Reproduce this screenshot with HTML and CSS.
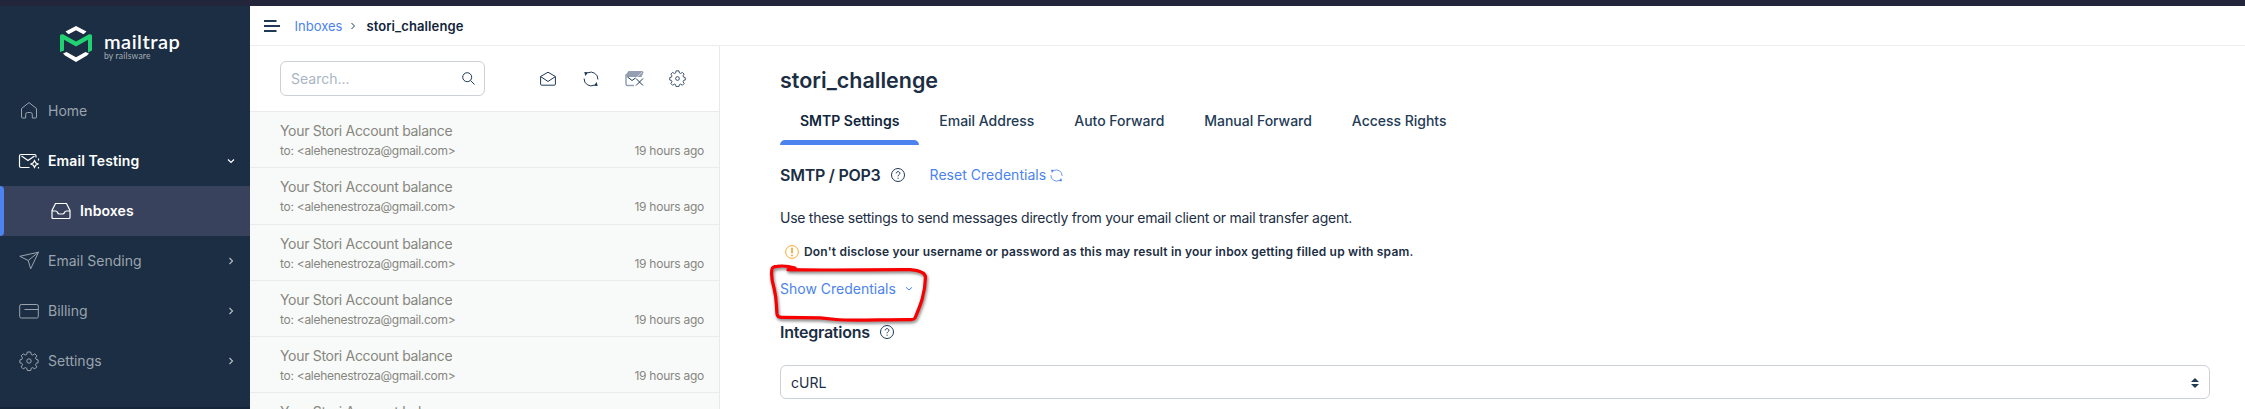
FILE: index.html
```
<!DOCTYPE html>
<html lang="en">
<head>
<meta charset="utf-8">
<title>stori_challenge</title>
<link rel="stylesheet" href="styles.css">
</head>
<body>
<svg class="defs" width="0" height="0">
  <symbol id="gear" viewBox="0 0 20 20"><path d="M8.3 1h3.4l.5 2.4 1.5.7 2.1-1.3 2 2-1.3 2.1.7 1.5 1.9.5v2.9l-1.9.5-.7 1.5 1.3 2.1-2 2-2.1-1.3-1.5.7-.5 2.2H8.3l-.5-2.2-1.5-.7-2.1 1.3-2-2 1.3-2.1-.7-1.5-1.9-.5V8.900l1.900-.5.7-1.500-1.300-2.100 2-2 2.100 1.300 1.500-.7z"/><circle cx="10" cy="10" r="2.2"/></symbol>
  <symbol id="chev" viewBox="0 0 8 8"><path d="M2.500 1l3 3-3 3"/></symbol>
  <symbol id="refresh" viewBox="0 0 16 16"><path d="M4.700 1.900A7 7 0 0 1 14.900 8.500M11.300 14.100A7 7 0 0 1 1.100 7.500"/><path class="head" d="M1.300 1l4 .300-3 3.600zM14.700 15l-4-.300 3-3.600z"/></symbol>
  <symbol id="help" viewBox="0 0 14 14"><circle cx="7" cy="7" r="6.500"/><path d="M5.200 5.400c0-2.400 3.700-2.300 3.700-.1C8.900 6.700 7.100 6.600 7.100 8.300M7.100 9.700v1.100"/></symbol>
</svg>
<div class="app">
  <div class="topbar"></div>
  <nav class="sidebar">
    <div class="logo">
      <svg class="mark" width="32" height="36" viewBox="0 0 32 36"><path fill="#fff" d="M16 0L26.500 5.500 23.500 8.200 16 4.200 8.500 8.200 5.500 5.500zM3 27.500L6.500 26 16 31.300 25.500 26 29 27.500 27 29.500 16 36 5 29.500z"/><path fill="#22d172" d="M0 26V9L2.500 8 16 15.500 29.500 8 32 9V24.500L28 26.500V13.800L16 20.500 4 13.800V24.500z"/></svg>
      <div class="brand"><span class="name">mailtrap</span><span class="by">by railsware</span></div>
    </div>
    <a class="item"><svg class="ic" width="20" height="20" viewBox="0 0 20 20"><path d="M2.500 7.500L10 1.600l7.500 5.900V16q0 1-1 1h-3.200v-3.500q0-2-1.800-2h-3q-1.800 0-1.800 2V17H3.500q-1 0-1-1z"/></svg><span>Home</span></a>
    <a class="item on"><svg class="ic wide" width="23" height="20" viewBox="0 0 23 20"><path d="M11.500 16.500H3q-1.500 0-1.500-1.500V5Q1.500 3.500 3 3.500h13.500Q18 3.500 18 5v1.500M3.500 5l6.500 4.500L16.500 5M16.500 9.500l1.200 2.300 2.300 1.200-2.300 1.200-1.200 2.300-1.200-2.300L13 13l2.300-1.200zM20.500 7.500v2M20.500 16v1.500"/></svg><span>Email Testing</span><svg class="arr" width="8" height="8"><path d="M1 2.500l3 3 3-3"/></svg></a>
    <a class="item sub on"><svg class="ic" width="20" height="20" viewBox="0 0 20 20"><path d="M4.500 2.500h11L19 9.500v7q0 1-1 1H2q-1 0-1-1v-7zM1 10h3.500q1.500 0 2 1.500t2 1.500h3q1.500 0 2-1.500t2-1.500H19"/></svg><span>Inboxes</span></a>
    <a class="item"><svg class="ic" width="20" height="20" viewBox="0 0 20 20"><path d="M.8 5.300L19.500 1.200 11.700 17.800 9.200 9.500zM9.200 9.500L19.500 1.200"/></svg><span>Email Sending</span><svg class="arr" width="8" height="8"><use href="#chev"/></svg></a>
    <a class="item"><svg class="ic" width="20" height="20" viewBox="0 0 20 20"><rect x=".7" y="3.500" width="18.600" height="13.500" rx="1.500"/><path d="M5.500 8.500h13.800"/></svg><span>Billing</span><svg class="arr" width="8" height="8"><use href="#chev"/></svg></a>
    <a class="item"><svg class="ic" width="20" height="20"><use href="#gear"/></svg><span>Settings</span><svg class="arr" width="8" height="8"><use href="#chev"/></svg></a>
  </nav>
  <header class="crumbs">
    <svg width="16" height="12" viewBox="0 0 16 12"><path class="fill" d="M0 0h12.500v2H0zM0 5h16v2H0zM0 10h12.500v2H0z"/></svg>
    <a class="link">Inboxes</a><svg class="sep" width="8" height="8"><use href="#chev"/></svg><b>stori_challenge</b>
  </header>
  <section class="mail">
    <div class="tools">
      <div class="search"><span>Search...</span><svg width="13" height="13" viewBox="0 0 13 13"><circle cx="5.200" cy="5.200" r="4.500"/><path d="M8.500 8.500l4 4"/></svg></div>
      <svg class="t1" width="16" height="16" viewBox="0 0 16 16"><path d="M.6 5.500L8 1.200l7.400 4.300V13q0 1.200-1.200 1.200H1.800Q.6 14.200.6 13zM.6 5.500L8 10.500l7.400-5"/></svg>
      <svg class="t2" width="16" height="16"><use href="#refresh"/></svg>
      <svg class="t3" width="19" height="16" viewBox="0 0 19 16"><path fill="#94a0b2" stroke="none" d="M3.500 0h13.500q1.500 0 1.500 1.500L16.500 6H2L.5 4z"/><path stroke="#94a0b2" stroke-width="1.500" d="M1 3.500V13q0 1.500 1.500 1.500H9"/><path d="M2.500 6L7 9.500l3.500-2.500M11 7.500l7 7M18 7.500l-7 7"/><path stroke="#fff" stroke-dasharray="1.500 1" d="M12.500 5.500l4.500-4"/></svg>
      <svg class="t4" width="17" height="17"><use href="#gear"/></svg>
    </div>
    <div class="row"><p>Your Stori Account balance</p><div><span class="to">to: &lt;alehenestroza@gmail.com&gt;</span><span class="ago">19 hours ago</span></div></div>
    <div class="row"><p>Your Stori Account balance</p><div><span class="to">to: &lt;alehenestroza@gmail.com&gt;</span><span class="ago">19 hours ago</span></div></div>
    <div class="row"><p>Your Stori Account balance</p><div><span class="to">to: &lt;alehenestroza@gmail.com&gt;</span><span class="ago">19 hours ago</span></div></div>
    <div class="row"><p>Your Stori Account balance</p><div><span class="to">to: &lt;alehenestroza@gmail.com&gt;</span><span class="ago">19 hours ago</span></div></div>
    <div class="row"><p>Your Stori Account balance</p><div><span class="to">to: &lt;alehenestroza@gmail.com&gt;</span><span class="ago">19 hours ago</span></div></div>
    <div class="row"><p>Your Stori Account balance</p></div>
  </section>
  <main class="main">
    <h1>stori_challenge</h1>
    <div class="tabs"><a class="active">SMTP Settings</a><a>Email Address</a><a>Auto Forward</a><a>Manual Forward</a><a>Access Rights</a></div>
    <div class="heading"><h2>SMTP / POP3</h2><svg width="14" height="14"><use href="#help"/></svg><a class="link reset">Reset Credentials</a><svg class="blue" width="13" height="13"><use href="#refresh"/></svg></div>
    <p class="desc">Use these settings to send messages directly from your email client or mail transfer agent.</p>
    <div class="warn"><svg width="14" height="14" viewBox="0 0 14 14"><circle cx="7" cy="7" r="6.400"/><path stroke-width="1.800" d="M7 2.800v5.500M7 9.700v1.600"/></svg><b>Don't disclose your username or password as this may result in your inbox getting filled up with spam.</b></div>
    <div class="show"><a class="link">Show Credentials</a><svg class="blue" width="8" height="8"><path d="M1 2.300l3 2.700 3-2.700"/></svg></div>
    <div class="heading integ"><h2>Integrations</h2><svg width="14" height="14"><use href="#help"/></svg></div>
    <div class="select"><span>cURL</span><svg width="8" height="10" viewBox="0 0 8 10"><path class="fill" d="M4 0l4 4H0zM4 10L0 6h8z"/></svg></div>
  </main>
</div>
<svg class="scribble" width="170" height="70" viewBox="765 260 170 70"><path d="M788 269.700C820 270.500 880 269.500 910 269.700Q925 271 925.500 277C925 295 920 306 915 318Q914 319.600 911 319.600C880 319.500 850 321 836 319.500L820 317.800 781 317.300Q777.500 317.300 777 314C776 304 777 300 774 288 771 278 771 274 772 269Q772.500 266.500 777 266.300C784 265.500 790 266.500 795 268"/></svg>
</body>
</html>
```
FILE: styles.css
```
* { box-sizing: border-box; }
body { margin: 0; font: 14px/20px Inter, "Liberation Sans", sans-serif; color: #1b2e43; background: #fff; overflow: hidden; }
h1, h2, p { margin: 0; font-weight: 600; }
svg { fill: none; stroke: #1f3956; flex: none; display: block; }
.defs { position: absolute; }
.fill { fill: #1f3956; stroke: none; }
.head { fill: currentColor; stroke: none; }
.link { color: #4c83ee; }
.app { display: grid; grid-template: 6px 40px 363px / 250px 470px 1fr; height: 409px; overflow: hidden; }
.topbar { grid-column: 1 / -1; background: #23263b; }
.sidebar { grid-row: 2 / 4; background: #1b2e43; border-bottom: 2px solid #172539; color: #9ba4ae; }
.logo { height: 80px; padding: 20px 0 0 60px; display: flex; gap: 12px; }
.mark { stroke: none; }
.brand { display: flex; flex-direction: column; padding-top: 4px; color: #fff; }
.name { font: 600 20px/22px Lato, sans-serif; letter-spacing: .5px; }
.by { font: 8.500px/8px Lato, sans-serif; color: #a7afb9; letter-spacing: .2px; }
.item { display: flex; align-items: center; height: 50px; padding: 0 15px 0 19px; }
.item .ic { width: 20px; margin-right: 9px; stroke: #9ba4ae; }
.item .wide { width: 23px; margin: 0 7px 0 -1px; }
.item .arr { margin-left: auto; stroke: #b4bbc3; stroke-width: 1.200; }
.item.on { color: #fff; font-weight: 600; letter-spacing: .1px; }
.item.on svg { stroke: #fff; stroke-width: 1.200; }
.item.sub { position: relative; background: #39425d; padding-left: 52px; }
.sub::before { content: ""; position: absolute; left: 0; top: 0; width: 4px; height: 50px; background: #4c83ee; border-radius: 0 4px 4px 0; }
.item.sub .ic { margin-right: 9px; margin-left: -1px; }
.crumbs { grid-column: 2 / 4; display: flex; align-items: center; border-bottom: 1px solid #ebedee; padding: 1px 0 0 14px; font-size: 13px; }
.crumbs .link { margin-left: 14.500px; }
.crumbs .sep { margin: 0 9px 0 7px; }
.crumbs b { font-weight: 600; color: #10243a; letter-spacing: .1px; }
.mail { border-right: 1px solid #e7e9eb; overflow: hidden; }
.tools { height: 66px; display: flex; align-items: center; padding-left: 30px; border-bottom: 1px solid #e9ecec; color: #1f3956; }
.search { width: 205px; height: 35px; border: 1px solid #ccd0d7; border-radius: 6px; display: flex; align-items: center; justify-content: space-between; padding: 0 9px 0 10px; color: #a9b5c4; }
.t1 { margin-left: 54.500px; }
.t2 { margin-left: 27px; }
.t3 { margin-left: 26.500px; }
.t4 { margin-left: 25px; }
.row { height: 56.250px; background: #f8faf9; border-bottom: 1px solid #e9ecec; padding: 9px 15px 0 30px; color: #86867e; }
.row p { font-weight: 400; height: 20px; letter-spacing: -.31px; }
.row div { display: flex; justify-content: space-between; font-size: 12px; }
.to { letter-spacing: -.28px; }
.ago { letter-spacing: -.25px; }
.main { padding: 22px 35px 0 60px; }
h1 { font-size: 21.500px; line-height: 24px; height: 24px; }
.tabs { display: flex; height: 53px; padding-top: 19px; }
.tabs a { padding: 0 20px; height: 34px; line-height: 20px; font-weight: 500; letter-spacing: -.02px; position: relative; color: #243b55; }
.tabs .active { font-weight: 600; letter-spacing: 0; color: #10243a; }
.tabs .active::after { content: ""; position: absolute; left: 0; right: 0; bottom: 0; height: 5px; background: #4c83ee; border-radius: 5px 5px 0 0; }
.heading { display: flex; align-items: center; height: 60px; }
h2 { font-size: 16px; line-height: 20px; margin-right: 10px; letter-spacing: -.25px; }
.reset { margin: 0 4px 0 25px; letter-spacing: .03px; }
.blue { stroke: #4c83ee; color: #4c83ee; }
.desc { font-weight: 400; height: 25px; line-height: 25px; letter-spacing: -.265px; }
.warn { display: flex; align-items: center; height: 43px; font-size: 12px; padding-left: 5px; gap: 5px; }
.warn svg { stroke: #fba834; }
.warn b { font-weight: 600; letter-spacing: .19px; }
.show { display: flex; align-items: center; gap: 9px; height: 32px; }
.integ { height: 53px; }
.select { height: 34px; margin-top: 7px; border: 1px solid #ccd0d7; border-radius: 6px; display: flex; align-items: center; justify-content: space-between; padding: 2px 10px 0; }
.scribble { position: absolute; left: 765px; top: 260px; stroke: #f80000; stroke-width: 3.200; stroke-linecap: round; stroke-linejoin: round; filter: drop-shadow(1px 2px 1.500px rgba(0,0,0,.5)); }
```
